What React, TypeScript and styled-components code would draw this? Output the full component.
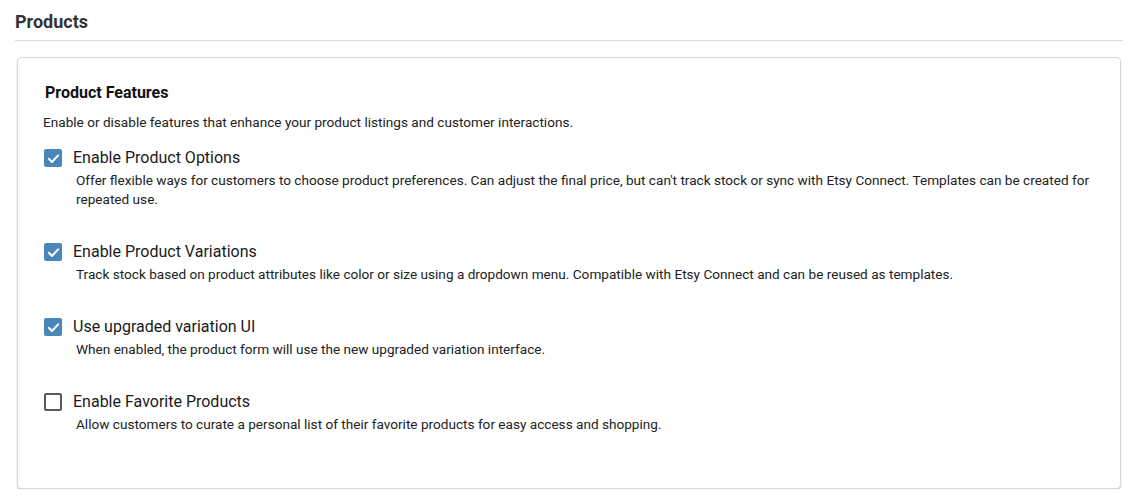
import React from 'react';
import styled, { createGlobalStyle } from 'styled-components';

const GlobalStyle = createGlobalStyle`
  body {
    margin: 0;
    background: #ffffff;
    font-family: Roboto, "Liberation Sans", Arial, sans-serif;
    -webkit-font-smoothing: antialiased;
  }
`;

const Page = styled.div`
  padding: 11px 10px 0 15px;
`;

const PageTitle = styled.h1`
  margin: 0;
  padding-bottom: 8px;
  font-size: 18px;
  line-height: 21px;
  font-weight: 700;
  color: #333333;
  border-bottom: 1px solid #dcdcdc;
`;

const Card = styled.section`
  margin: 16px 2px 0;
  padding: 25px 27px 54px 26px;
  background: #ffffff;
  border: 1px solid #d6d6d6;
  border-radius: 4px;
  box-shadow: 0 2px 2px -1px rgba(0, 0, 0, 0.3), 0 1px 2px 0 rgba(0, 0, 0, 0.08);
`;

const CardTitle = styled.h2`
  margin: 0 0 10px 1px;
  font-size: 16px;
  line-height: 20px;
  font-weight: 700;
  color: #111111;
`;

const CardIntro = styled.p`
  margin: 0 0 15px -1px;
  font-size: 13.6px;
  line-height: 19px;
  color: #222222;
`;

const FeatureList = styled.div`
  display: flex;
  flex-direction: column;
  gap: 32px;
`;

const Feature = styled.div`
  display: flex;
  flex-direction: column;
`;

const FeatureRow = styled.label`
  display: flex;
  align-items: center;
  gap: 11px;
  cursor: pointer;
`;

const Box = styled.span<{ $checked: boolean }>`
  width: 18px;
  height: 18px;
  box-sizing: border-box;
  border-radius: 2px;
  display: flex;
  align-items: center;
  justify-content: center;
  flex-shrink: 0;
  background: ${({ $checked }) => ($checked ? '#4a86b9' : '#ffffff')};
  border: ${({ $checked }) => ($checked ? 'none' : '2px solid #5a5a5a')};
`;

const FeatureLabel = styled.span`
  font-size: 16px;
  line-height: 22px;
  color: #1a1a1a;
`;

const FeatureDesc = styled.p`
  margin: 2px 0 0 32px;
  font-size: 13.6px;
  line-height: 19px;
  color: #222222;
`;

interface FeatureItem {
  label: string;
  description: string;
  enabled: boolean;
}

const FEATURES: FeatureItem[] = [
  {
    label: 'Enable Product Options',
    description:
      "Offer flexible ways for customers to choose product preferences. Can adjust the final price, but can't track stock or sync with Etsy Connect. Templates can be created for repeated use.",
    enabled: true,
  },
  {
    label: 'Enable Product Variations',
    description:
      'Track stock based on product attributes like color or size using a dropdown menu. Compatible with Etsy Connect and can be reused as templates.',
    enabled: true,
  },
  {
    label: 'Use upgraded variation UI',
    description: 'When enabled, the product form will use the new upgraded variation interface.',
    enabled: true,
  },
  {
    label: 'Enable Favorite Products',
    description:
      'Allow customers to curate a personal list of their favorite products for easy access and shopping.',
    enabled: false,
  },
];

const Checkbox = ({ checked }: { checked: boolean }) => (
  <Box $checked={checked}>
    {checked && (
      <svg width="15" height="15" viewBox="0 0 24 24" fill="none">
        <path d="M4.5 12.5l5 5 10-10.5" stroke="#ffffff" strokeWidth="3.2" strokeLinecap="round" strokeLinejoin="round" />
      </svg>
    )}
  </Box>
);

const App = () => {
  const [features, setFeatures] = React.useState(FEATURES);

  const toggle = (index: number) =>
    setFeatures((prev) => prev.map((f, i) => (i === index ? { ...f, enabled: !f.enabled } : f)));

  return (
    <>
      <GlobalStyle />
      <Page>
        <PageTitle>Products</PageTitle>
        <Card>
          <CardTitle>Product Features</CardTitle>
          <CardIntro>Enable or disable features that enhance your product listings and customer interactions.</CardIntro>
          <FeatureList>
            {features.map((feature, i) => (
              <Feature key={feature.label}>
                <FeatureRow onClick={() => toggle(i)}>
                  <Checkbox checked={feature.enabled} />
                  <FeatureLabel>{feature.label}</FeatureLabel>
                </FeatureRow>
                <FeatureDesc>{feature.description}</FeatureDesc>
              </Feature>
            ))}
          </FeatureList>
        </Card>
      </Page>
    </>
  );
};

export default App;
